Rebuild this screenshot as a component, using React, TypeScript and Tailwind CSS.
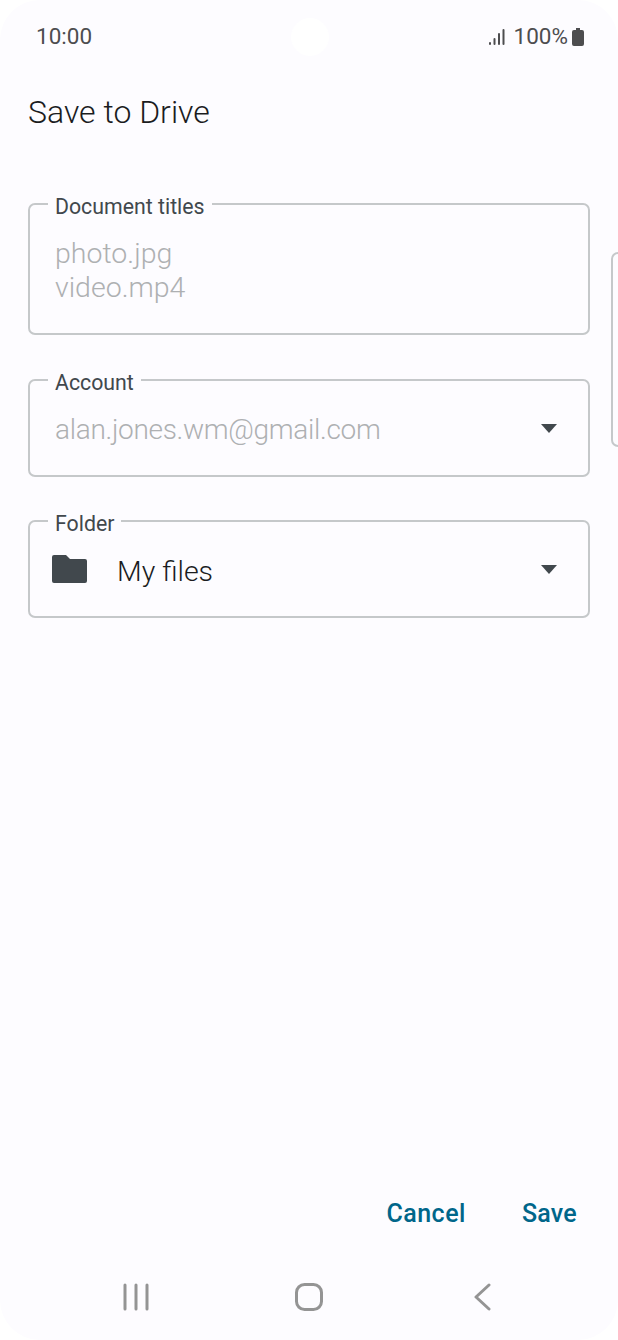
const font = "font-['Roboto',sans-serif]";

function Caret({ className }: { className: string }) {
  return (
    <svg width="18" height="10" viewBox="0 0 18 10" className={`shrink-0 ${className}`}>
      <path d="M1 1h16l-8 9z" fill="#41484d" />
    </svg>
  );
}

function OutlinedField({
  label,
  className,
  children,
}: {
  label: string;
  className: string;
  children: React.ReactNode;
}) {
  return (
    <fieldset className={`rounded-[7px] border-2 border-[#c5c8ca] pl-[18px] ${className}`}>
      <legend className="ml-0 px-[7px] pt-[6px] text-[21.3px] leading-[22px] text-[#41484d]">{label}</legend>
      {children}
    </fieldset>
  );
}

function StatusBar() {
  return (
    <div className="grid h-[72px] grid-cols-3 items-center pl-9 pr-[34px] pt-px text-[22.5px] text-[#4d4d4f]">
      <span>10:00</span>
      <div className="ml-[72px] h-[38px] w-[38px] rounded-full bg-white" />
      <div className="flex items-center justify-end">
        <svg width="16" height="18" viewBox="0 0 16 18" className="mr-[9px]" fill="#4d4d4f">
          <rect x="0" y="14" width="2" height="3" rx="1" />
          <rect x="4.5" y="10" width="2" height="7" rx="1" />
          <rect x="9" y="5" width="2" height="12" rx="1" />
          <rect x="13.5" y="1" width="2" height="16" rx="1" />
        </svg>
        <span>100%</span>
        <svg width="12" height="18" viewBox="0 0 12 18" className="ml-[4px]" fill="#4d4d4f">
          <path d="M4 0h4v2h2a2 2 0 0 1 2 2v12a2 2 0 0 1-2 2H2a2 2 0 0 1-2-2V4a2 2 0 0 1 2-2h2z" />
        </svg>
      </div>
    </div>
  );
}

export default function App() {
  return (
    <div className={`h-[1340px] w-[618px] overflow-hidden bg-white ${font}`}>
      <div className="flex h-full flex-col rounded-[40px] bg-[#fdfcff]">
        <StatusBar />

        <h1 className="ml-7 mt-5 text-[32px] font-[350] leading-[40px] text-[#1b1c1e]">Save to Drive</h1>

        <div className="mt-[58px] flex gap-[21px] overflow-hidden pl-7">
          <div className="flex w-[562px] shrink-0 flex-col gap-[31px]">
            <OutlinedField label="Document titles" className="h-[145px]">
              <div className="pl-[7px] pt-[19px] text-[28.5px] font-[350] leading-[34px] text-[#aeb0b2]">
                <div>photo.jpg</div>
                <div>video.mp4</div>
              </div>
            </OutlinedField>

            <OutlinedField label="Account" className="h-[111px]">
              <div className="flex items-center justify-between pl-[7px] pr-[30px] pt-[19px] text-[28px] font-[350] leading-[34px] tracking-[-0.3px] text-[#aeb0b2]">
                <span>alan.jones.wm@gmail.com</span>
                <Caret className="mb-[4px]" />
              </div>
            </OutlinedField>

            <OutlinedField label="Folder" className="-mt-px h-[111px]">
              <div className="flex items-center pr-[30px] pt-[20px] text-[28.5px] font-[350] leading-[34px] text-[#1b1c1e]">
                <svg width="35" height="28" viewBox="0 0 35 28" className="mb-[6px] ml-[4px] shrink-0" fill="#41484d">
                  <path d="M2 0h12l4 4h15a2 2 0 0 1 2 2v20a2 2 0 0 1-2 2H2a2 2 0 0 1-2-2V2a2 2 0 0 1 2-2z" />
                </svg>
                <span className="ml-[30px] flex-1">My files</span>
                <Caret className="mb-[6px]" />
              </div>
            </OutlinedField>
          </div>

          <div className="mt-[62px] h-[195px] w-[40px] shrink-0 rounded-[7px] border-2 border-[#c5c8ca]" />
        </div>

        <div className="mt-auto flex justify-end gap-[56px] pr-[41px] text-[25px] font-medium leading-[34px] text-[#00668a]">
          <span className="tracking-[0.5px]">Cancel</span>
          <span className="tracking-[0.25px]">Save</span>
        </div>

        <div className="mb-[23px] mt-[46px] flex h-[40px] items-center justify-center">
          <div className="flex w-[173px] justify-center">
            <svg width="26" height="28" viewBox="0 0 26 28" fill="none" stroke="#949494" strokeWidth="3" strokeLinecap="round">
              <path d="M2 2v24M13 2v24M24 2v24" />
            </svg>
          </div>
          <div className="flex w-[173px] justify-center">
            <svg width="28" height="28" viewBox="0 0 28 28" fill="none" stroke="#949494" strokeWidth="3">
              <rect x="1.5" y="1.5" width="25" height="25" rx="8" />
            </svg>
          </div>
          <div className="flex w-[173px] justify-center">
            <svg width="18" height="28" viewBox="0 0 18 28" fill="none" stroke="#949494" strokeWidth="3" strokeLinecap="round" strokeLinejoin="round">
              <path d="M16 2 3 14l13 12" />
            </svg>
          </div>
        </div>
      </div>
    </div>
  );
}
